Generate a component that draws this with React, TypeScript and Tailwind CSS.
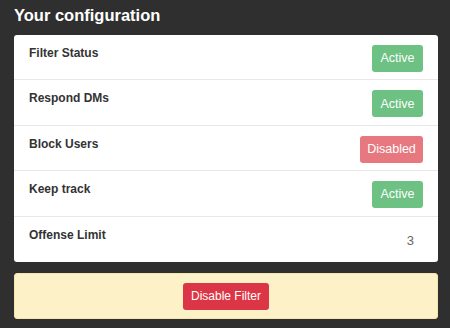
import React from 'react';

type Row = {
  label: string;
  status?: 'active' | 'disabled';
  value?: string;
};

const rows: Row[] = [
  { label: 'Filter Status', status: 'active' },
  { label: 'Respond DMs', status: 'active' },
  { label: 'Block Users', status: 'disabled' },
  { label: 'Keep track', status: 'active' },
  { label: 'Offense Limit', value: '3' },
];

const Badge: React.FC<{ status: 'active' | 'disabled' }> = ({ status }) => {
  const styles = {
    active: 'bg-[#6cc183] w-[51px]',
    disabled: 'bg-[#e87880] w-[63px]',
  };
  return (
    <span
      className={`${styles[status]} h-[27px] rounded-[3px] flex items-center justify-center text-white text-[12.5px]`}
    >
      {status === 'active' ? 'Active' : 'Disabled'}
    </span>
  );
};

export default function App() {
  return (
    <div
      className="w-[450px] h-[328px] bg-[#2f2f2f] pl-[14px] pr-[12px] pt-[3px] overflow-hidden"
      style={{ fontFamily: '"Liberation Sans", Arial, sans-serif' }}
    >
      <h1 className="text-white font-bold text-[16.5px] h-[32px] leading-[24px]">Your configuration</h1>
      <div className="bg-white rounded-[3px]">
        {rows.map((row, i) => (
          <div
            key={row.label}
            className={`h-[45.4px] px-[15px] flex justify-between ${
              i < rows.length - 1 ? 'border-b border-[#e8e8e8]' : ''
            }`}
          >
            <span className="pt-[9px] text-[12px] font-bold text-[#333]">{row.label}</span>
            {row.status ? (
              <div className="pt-[10px]">
                <Badge status={row.status} />
              </div>
            ) : (
              <span className="self-center pr-[9px] text-[13px] text-[#666] pt-[2px]">{row.value}</span>
            )}
          </div>
        ))}
      </div>
      <div className="mt-[11.5px] h-[46px] bg-[#fdf1c7] border border-[#f6e5ad] rounded-[3px] flex items-center justify-center">
        <button className="bg-[#dc3545] text-white text-[12px] h-[27px] w-[86px] rounded-[3px]">
          Disable Filter
        </button>
      </div>
    </div>
  );
}
